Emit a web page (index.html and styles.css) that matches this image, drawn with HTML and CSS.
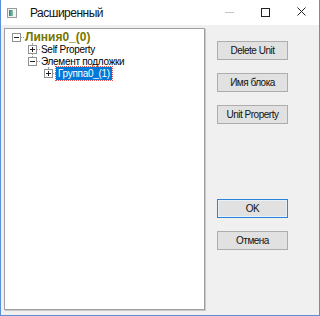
FILE: index.html
```html
<!DOCTYPE html>
<html>
<head>
  <title>Расширенный</title>
  <link rel="stylesheet" href="styles.css">
</head>
<body>
  <div class="window">
    <div class="titlebar">
      <span class="app-icon"><span class="app-icon-fill"></span></span>
      <span class="title">Расширенный</span>
      <span class="min-line"></span>
      <span class="max-box"></span>
      <svg class="close-x" width="9" height="9" viewBox="0 0 9 9"><path d="M0.5 0.5 L8.5 8.5 M8.5 0.5 L0.5 8.5" stroke="#222" stroke-width="1" fill="none"/></svg>
    </div>

    <div class="client">
      <div class="tree">
        <div class="node root">
          <span class="toggle"></span><span class="dash"></span><span class="label">Линия0_(0)</span>
        </div>
        <div class="node level1">
          <span class="toggle plus"></span><span class="dash"></span><span class="label">Self Property</span>
        </div>
        <div class="node level1">
          <span class="toggle"></span><span class="dash"></span><span class="label">Элемент подложки</span>
        </div>
        <div class="node level2">
          <span class="toggle plus"></span><span class="dash"></span><span class="label selected">Группа0_(1)</span>
        </div>
        <span class="vline v-level1"></span>
        <span class="vline v-level2"></span>
      </div>

      <div class="buttons">
        <button class="btn">Delete Unit</button>
        <button class="btn">Имя блока</button>
        <button class="btn last">Unit Property</button>
        <button class="btn ok">OK</button>
        <button class="btn">Отмена</button>
      </div>
    </div>
  </div>
</body>
</html>
```

FILE: styles.css
```css
body { margin: 0; background: #fff; font-family: "Liberation Sans", Arial, sans-serif; }

.window { width: 318px; height: 315px; border: 1px solid #5b8fd6; border-top: none; display: flex; flex-direction: column; background: #fff; }

.titlebar { height: 25px; display: flex; align-items: center; background: #fff; flex-shrink: 0; }
.app-icon { width: 8px; height: 8px; margin-left: 6px; border: 1px solid #9a9a9a; background: #f4f4f4; display: flex; }
.app-icon-fill { width: 4px; height: 6px; margin: 1px; background: linear-gradient(90deg, #2f7a8a, #8cc8a0); }
.title { font-size: 12px; letter-spacing: -0.5px; color: #111; margin-left: 13px; flex: 1; }
.min-line { width: 9px; height: 1px; background: #c4c4c4; margin-right: 27px; }
.max-box { width: 7px; height: 7px; border: 1px solid #222; margin-right: 27px; }
.close-x { margin-right: 13px; margin-bottom: 2px; }

.client { flex: 1; background: #f0f0f0; display: flex; padding: 3px 0 0 3px; }

.tree { position: relative; width: 199px; height: 280px; background: #fff; border: 1px solid #a0a0a0; box-shadow: 1px 1px 0 #c8c8c8; font-size: 10px; letter-spacing: -0.3px; color: #000; }

.node { height: 12px; display: flex; align-items: center; white-space: nowrap; }
.node.root { margin-top: 2px; padding-left: 7px; }
.node.level1 { padding-left: 23px; }
.node.level2 { padding-left: 39px; }

.toggle { position: relative; width: 7px; height: 7px; border: 1px solid #919191; background: #fff; flex-shrink: 0; z-index: 1; }
.toggle::before { content: ""; position: absolute; left: 1px; top: 3px; width: 5px; height: 1px; background: #222; }
.toggle.plus::after { content: ""; position: absolute; left: 3px; top: 1px; width: 1px; height: 5px; background: #222; }
.dash { width: 3px; border-top: 1px dotted #a0a0a0; }
.label { padding: 0 1px; }
.root .label { font-weight: bold; font-size: 12px; letter-spacing: 0; color: #767600; }
.selected { background: #0078d7; color: #fff; outline: 1px dotted #e05050; padding: 0 2px; line-height: 13px; }

.vline { position: absolute; border-left: 1px dotted #a0a0a0; }
.v-level1 { left: 27px; top: 14px; height: 18px; }
.v-level2 { left: 43px; top: 38px; height: 6px; }

.buttons { display: flex; flex-direction: column; margin-left: 12px; padding-top: 13px; }
.btn { width: 71px; height: 19px; margin: 0 0 13px 0; padding: 0; background: #e1e1e1; border: 1px solid #adadad; font-family: "Liberation Sans", Arial, sans-serif; font-size: 10px; letter-spacing: -0.5px; color: #111; }
.btn.last { margin-bottom: 0; }
.btn.ok { margin-top: 75px; border: 1px solid #2a84dc; box-shadow: inset 0 0 0 1px #e8f0f8; }
```
